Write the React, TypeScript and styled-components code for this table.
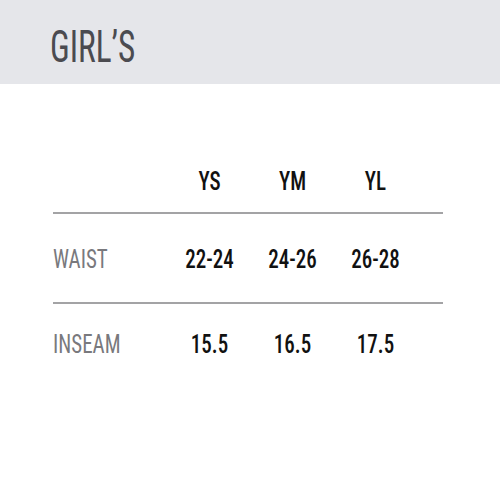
import React from 'react'
import styled, { createGlobalStyle } from 'styled-components'

const Global = createGlobalStyle`
  body {
    margin: 0;
    background: #fff;
    font-family: "Roboto Condensed", "Liberation Sans Narrow", "Liberation Sans", sans-serif;
  }
`;

const Page = styled.div`
  width: 500px;
  height: 500px;
  background: #fff;
  overflow: hidden;
`;

const Banner = styled.header`
  height: 84px;
  background: #e5e6ea;
  display: flex;
  align-items: center;
  padding-left: 50px;
  box-sizing: border-box;
`;

const Title = styled.h1`
  margin: 0;
  font-size: 45px;
  font-weight: 400;
  color: #4b4b50;
  line-height: 1;
  transform: scaleX(0.74);
  transform-origin: left center;
  padding-top: 8px;
`;

const Chart = styled.div`
  margin: 65px 57px 0 53px;
`;

const Row = styled.div<{ h: number; ruled?: boolean }>`
  display: grid;
  grid-template-columns: 115px 83px 83px 83px 1fr;
  align-items: center;
  height: ${p => p.h}px;
  border-bottom: ${p => (p.ruled ? '2px solid #a3a3a5' : 'none')};
`;

const Cell = styled.span<{ label?: boolean }>`
  display: block;
  font-size: 25px;
  line-height: 1;
  font-weight: ${p => (p.label ? 400 : 500)};
  color: ${p => (p.label ? '#79797d' : '#111')};
  text-align: ${p => (p.label ? 'left' : 'center')};
  transform: scaleX(0.84);
  transform-origin: ${p => (p.label ? 'left' : 'center')} center;
  padding-top: 2px;
`;

const sizes = ['YS', 'YM', 'YL'];
const rows = [
  { name: 'WAIST', values: ['22-24', '24-26', '26-28'], h: 88 },
  { name: 'INSEAM', values: ['15.5', '16.5', '17.5'], h: 78 },
];

export default function App() {
  return (
    <Page>
      <Global />
      <Banner>
        <Title>GIRL’S</Title>
      </Banner>
      <Chart>
        <Row h={63} ruled>
          <span />
          {sizes.map(s => (
            <Cell key={s}>{s}</Cell>
          ))}
        </Row>
        {rows.map((r, i) => (
          <Row key={r.name} h={r.h} ruled={i < rows.length - 1}>
            <Cell label>{r.name}</Cell>
            {r.values.map(v => (
              <Cell key={v}>{v}</Cell>
            ))}
          </Row>
        ))}
      </Chart>
    </Page>
  )
}
